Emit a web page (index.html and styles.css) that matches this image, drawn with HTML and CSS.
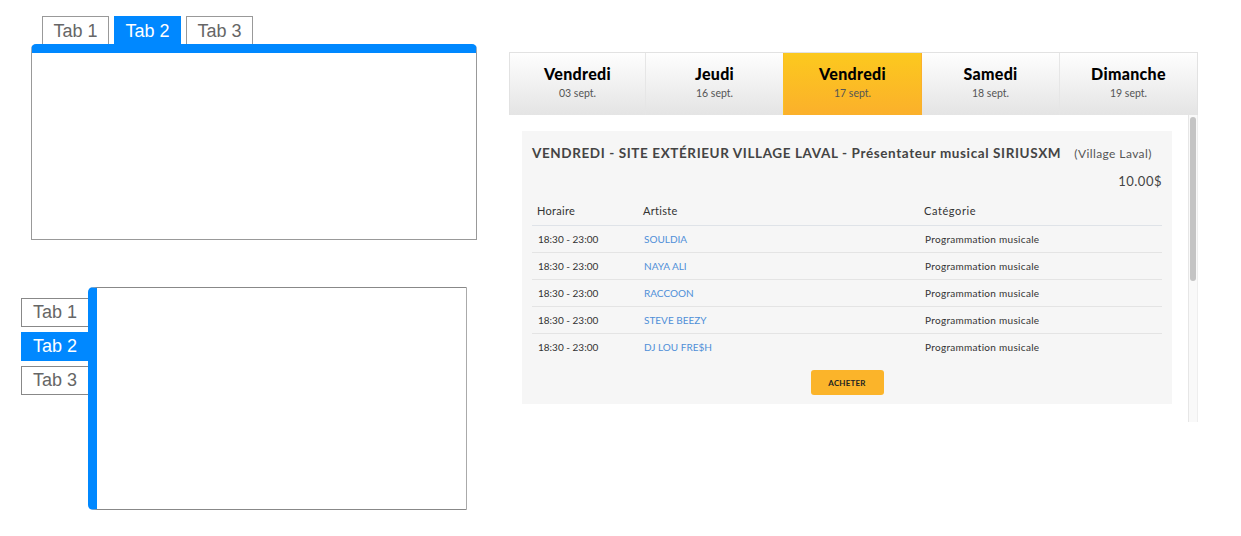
FILE: index.html
```html
<!DOCTYPE html>
<html lang="fr">
<head>
<meta charset="utf-8">
<title>Tabs</title>
<link rel="stylesheet" href="styles.css">
</head>
<body>
<main class="page">
  <div class="left-col">
    <section class="htabs">
      <div class="htabs-bar">
        <div class="htab">Tab 1</div>
        <div class="htab active">Tab 2</div>
        <div class="htab">Tab 3</div>
      </div>
      <div class="htabs-panel"></div>
    </section>
    <section class="vtabs">
      <div class="vtabs-bar">
        <div class="vtab">Tab 1</div>
        <div class="vtab active">Tab 2</div>
        <div class="vtab">Tab 3</div>
      </div>
      <div class="vtabs-panel"></div>
    </section>
  </div>

  <section class="days">
    <div class="days-bar">
      <div class="day day-first"><div class="day-name">Vendredi</div><div class="day-date">03 sept.</div></div>
      <div class="day"><div class="day-name">Jeudi</div><div class="day-date">16 sept.</div></div>
      <div class="day active"><div class="day-name">Vendredi</div><div class="day-date">17 sept.</div></div>
      <div class="day"><div class="day-name">Samedi</div><div class="day-date">18 sept.</div></div>
      <div class="day"><div class="day-name">Dimanche</div><div class="day-date">19 sept.</div></div>
    </div>
    <div class="days-body">
      <div class="days-content">
        <div class="event-card">
          <div class="event-title">
            <span class="event-name">VENDREDI - SITE EXTÉRIEUR VILLAGE LAVAL - Présentateur musical SIRIUSXM</span>
            <span class="event-place">(Village Laval)</span>
          </div>
          <div class="event-price">10.00$</div>
          <table class="event-table">
            <thead>
              <tr><th class="c-time">Horaire</th><th class="c-artist">Artiste</th><th class="c-cat">Catégorie</th></tr>
            </thead>
            <tbody>
              <tr><td>18:30 - 23:00</td><td class="artist">SOULDIA</td><td class="cat">Programmation musicale</td></tr>
              <tr><td>18:30 - 23:00</td><td class="artist">NAYA ALI</td><td class="cat">Programmation musicale</td></tr>
              <tr><td>18:30 - 23:00</td><td class="artist">RACCOON</td><td class="cat">Programmation musicale</td></tr>
              <tr><td>18:30 - 23:00</td><td class="artist">STEVE BEEZY</td><td class="cat">Programmation musicale</td></tr>
              <tr><td>18:30 - 23:00</td><td class="artist">DJ LOU FRE$H</td><td class="cat">Programmation musicale</td></tr>
            </tbody>
          </table>
          <div class="buy-row"><button class="buy-btn">ACHETER</button></div>
        </div>
      </div>
      <div class="scrollbar"><div class="scroll-thumb"></div></div>
    </div>
  </section>
</main>
</body>
</html>
```

FILE: styles.css
```css
* { box-sizing: border-box; }
html, body { margin: 0; padding: 0; background: #fff; }
body { font-family: "Liberation Sans", Arial, sans-serif; }

.page {
  display: flex;
  align-items: flex-start;
  padding-top: 16px;
}

.left-col {
  width: 477px;
  padding-left: 21px;
  display: flex;
  flex-direction: column;
}

/* horizontal tabs */
.htabs { margin-left: 10px; width: 446px; }
.htabs-bar { display: flex; gap: 5px; padding-left: 11px; }
.htab {
  width: 67px;
  height: 28px;
  border: 1px solid #999;
  border-bottom: none;
  color: #666;
  font-size: 18px;
  line-height: 28px;
  text-align: center;
}
.htab.active { background: #0088ff; border-color: #0088ff; color: #fff; }
.htabs-panel {
  height: 196px;
  border: 1px solid #999;
  border-top: 9px solid #0088ff;
  border-radius: 5px 5px 0 0;
}

/* vertical tabs */
.vtabs { margin-top: 47px; display: flex; align-items: flex-start; }
.vtabs-bar {
  width: 67px;
  padding-top: 11px;
  display: flex;
  flex-direction: column;
  gap: 5px;
}
.vtab {
  height: 29px;
  border: 1px solid #888;
  border-right: none;
  color: #666;
  font-size: 18px;
  line-height: 27px;
  text-align: center;
}
.vtab.active { background: #0088ff; border-color: #0088ff; color: #fff; }
.vtabs-panel {
  width: 379px;
  height: 223px;
  border: 1px solid #888;
  border-right-color: #aaa;
  border-left: 9px solid #0088ff;
  border-radius: 5px 0 0 5px;
}

/* day schedule widget */
.days {
  margin-left: 32px;
  margin-top: 36px;
  width: 689px;
  font-family: Lato, "Noto Sans", sans-serif;
}
.days-bar {
  display: flex;
  height: 63px;
  border: 1px solid #e2e2e2;
  border-bottom: none;
}
.day {
  flex: 1 1 0;
  text-align: center;
  background: linear-gradient(#fefefe, #e4e4e4);
  border-left: 1px solid #e6e6e6;
  padding-top: 12px;
}
.day.day-first { flex: 0 0 135px; border-left: none; }
.day.active { background: linear-gradient(#fcc91e, #fbb02b); border-left-color: #fbbf22; }
.day.active + .day { border-left-color: #fbb02b; }
.day-name { font-weight: 900; font-size: 16px; letter-spacing: 0.3px; color: #000; line-height: 18px; }
.day-date { font-size: 10.5px; color: #555; margin-top: 3px; line-height: 14px; }

.days-body { display: flex; height: 307px; }
.days-content { flex: 1; padding: 16px 16px 0 13px; }
.scrollbar {
  width: 10px;
  background: #f9f9f9;
  border-left: 1px solid #e6e6e6;
  border-right: 1px solid #eeeeee;
  padding: 2px 1px 0 1px;
}
.scroll-thumb { height: 164px; background: #c4c4c4; border-radius: 3px; }

.event-card { background: #f6f6f6; padding: 12px 10px 9px 10px; color: #444; }
.event-title { line-height: 18px; white-space: nowrap; }
.event-name { font-weight: 700; font-size: 13.5px; letter-spacing: 0.6px; color: #444; }
.event-place { font-size: 12px; letter-spacing: 0.4px; color: #555; margin-left: 9px; }
.event-price { text-align: right; font-size: 13px; letter-spacing: 0.5px; line-height: 18px; margin-top: 9px; color: #444; }

.event-table { width: 100%; border-collapse: collapse; margin-top: 7px; }
.event-table th {
  text-align: left;
  font-weight: 400;
  font-size: 11px;
  letter-spacing: 0.3px;
  color: #333;
  height: 28px;
  padding: 0 0 0 5px;
  border-bottom: 1px solid #dfe3e8;
}
.event-table th.c-cat { letter-spacing: 0.6px; }
.c-time { width: 106px; }
.c-artist { width: 281px; }
.event-table td {
  font-size: 10px;
  color: #333;
  height: 27px;
  padding: 0 0 0 6px;
  border-top: 1px solid #e4e4e4;
}
.event-table tbody tr:first-child td { border-top: none; }
.event-table td.artist { color: #4f8fd8; }
.event-table td.cat { letter-spacing: 0.3px; }

.buy-row { display: flex; justify-content: center; margin-top: 10px; }
.buy-btn {
  width: 73px;
  height: 25px;
  border: none;
  border-radius: 3px;
  background: #fbb42a;
  color: #222;
  font-family: Lato, "Noto Sans", sans-serif;
  font-weight: 700;
  font-size: 8px;
  letter-spacing: 0.2px;
  padding: 0;
}
```
